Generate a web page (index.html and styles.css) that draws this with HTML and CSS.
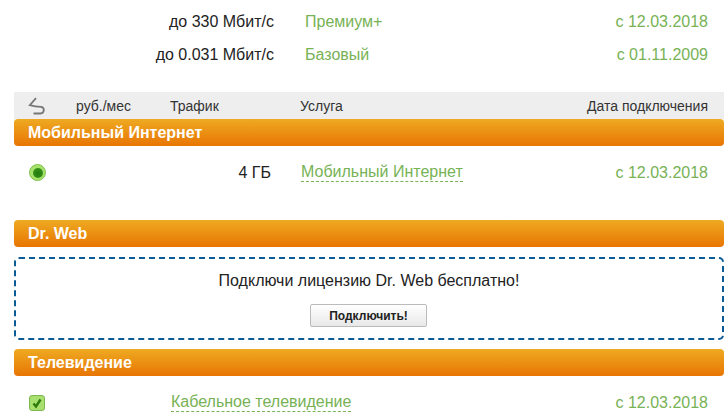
FILE: index.html
```html
<!DOCTYPE html>
<html lang="ru">
<head>
<meta charset="utf-8">
<title>Услуги</title>
<link rel="stylesheet" href="styles.css">
</head>
<body>
<div class="page">
  <div class="top-list">
    <div class="row top-row"><span class="speed">до 330 Мбит/с</span><span class="plan">Премиум+</span><span class="date">с 12.03.2018</span></div>
    <div class="row top-row"><span class="speed">до 0.031 Мбит/с</span><span class="plan">Базовый</span><span class="date">с 01.11.2009</span></div>
  </div>
  <div class="thead">
    <svg class="swap" width="18" height="18" viewBox="0 0 18 18"><path d="M8 1.200 1.800 8.200 Q7 9.800 13 9.800 Q15.800 10 15.800 13 Q15.500 16.500 12.500 16.500 L5.500 16.500" fill="none" stroke="#777" stroke-width="1.800"/></svg>
    <span class="th-price">руб./мес</span><span class="th-traffic">Трафик</span><span class="th-service">Услуга</span><span class="th-date">Дата подключения</span>
  </div>
  <h2 class="band">Мобильный Интернет</h2>
  <div class="row item item-mobile">
    <span class="radio"><span class="radio-dot"></span></span>
    <span class="amount">4 ГБ</span>
    <a class="link link-mobile">Мобильный Интернет</a>
    <span class="date">с 12.03.2018</span>
  </div>
  <h2 class="band band-web">Dr. Web</h2>
  <div class="promo">
    <p class="promo-text">Подключи лицензию Dr. Web бесплатно!</p>
    <button class="btn">Подключить!</button>
  </div>
  <h2 class="band band-tv">Телевидение</h2>
  <div class="row item item-tv">
    <span class="check"><svg width="12" height="12" viewBox="0 0 12 12"><path d="M2.500 6.500 5 9.500 9.500 2.500" fill="none" stroke="#2f7a0c" stroke-width="2.400"/></svg></span>
    <a class="link link-tv">Кабельное телевидение</a>
    <span class="date">с 12.03.2018</span>
  </div>
</div>
</body>
</html>
```
FILE: styles.css
```css
html, body { margin: 0; padding: 0; background: #fff; }
body { width: 725px; height: 417px; overflow: hidden; font-family: "Liberation Sans", Arial, sans-serif; color: #222; }
.page { padding: 0 1px 0 14px; }
.row { display: flex; align-items: center; font-size: 16px; }
.date { margin-left: auto; margin-right: 16px; color: #77b255; font-size: 16px; }
.top-list { padding-top: 5px; height: 92px; box-sizing: border-box; }
.top-row { height: 33px; }
.speed { width: 260px; text-align: right; color: #222; }
.plan { margin-left: 31px; color: #77b255; }
.thead { display: flex; align-items: center; height: 27px; background: #eeeeee; font-size: 14px; color: #333; }
.swap { margin-left: 14px; }
.th-price { margin-left: 30px; width: 94px; }
.th-traffic { width: 130px; }
.th-date { margin-left: auto; margin-right: 16px; }
.band { margin: 0; height: 27px; line-height: 27px; padding-left: 14px; border-radius: 4px; background: linear-gradient(#eeaa22, #e87503); color: #fff; font-size: 16px; font-weight: bold; }
.item-mobile { height: 53px; }
.radio { width: 17px; height: 17px; margin-left: 15px; border-radius: 50%; background: #a6e26c; border: 1px solid #7fc24e; box-sizing: border-box; display: flex; align-items: center; justify-content: center; }
.radio-dot { width: 10px; height: 10px; border-radius: 50%; background: radial-gradient(circle at 50% 55%, #1f7a0c, #3f9c1e); }
.amount { width: 225px; text-align: right; }
.link { color: #77b255; font-size: 16px; border-bottom: 1px dashed #77b255; line-height: 18px; }
.link-mobile { margin-left: 30px; }
.band-web { margin-top: 21px; }
.promo { margin-top: 10px; height: 83px; box-sizing: border-box; border: 2px dashed #0a5a96; border-radius: 5px; text-align: center; padding-top: 12px; }
.promo-text { margin: 0; font-size: 16px; color: #222; line-height: 20px; }
.btn { display: block; margin: 13px 0 0 294px; width: 117px; height: 23px; padding: 0; border: 1px solid #bbb; border-radius: 2px; background: linear-gradient(#fff, #e8e8e8); font: bold 12px "Liberation Sans", Arial, sans-serif; color: #222; }
.band-tv { margin-top: 9px; }
.item-tv { height: 53px; }
.check { width: 16px; height: 16px; margin-left: 15px; box-sizing: border-box; border: 1px solid #7fb850; border-radius: 3px; background: #a8e070; display: flex; align-items: center; justify-content: center; }
.link-tv { margin-left: 126px; }
```
